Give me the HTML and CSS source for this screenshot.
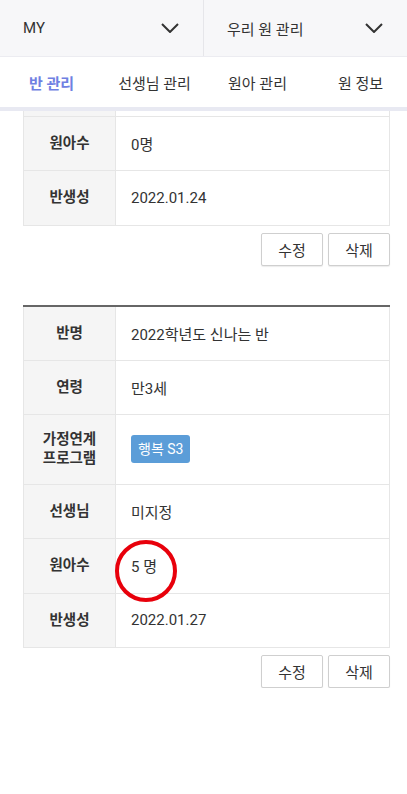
FILE: index.html
```html
<!DOCTYPE html>
<html lang="ko">
<head>
  <meta charset="UTF-8">
  <meta name="viewport" content="width=device-width, initial-scale=1.0">
  <title>우리 원 관리</title>
  <link rel="stylesheet" href="styles.css">
</head>
<body>
  <header class="topbar">
    <div class="picker">
      <span>MY</span>
      <svg class="chev" viewBox="0 0 18 10" width="18" height="10"><path d="M1 1l8 8 8-8" fill="none" stroke="#333" stroke-width="2"/></svg>
    </div>
    <div class="picker">
      <span>우리 원 관리</span>
      <svg class="chev" viewBox="0 0 18 10" width="18" height="10"><path d="M1 1l8 8 8-8" fill="none" stroke="#333" stroke-width="2"/></svg>
    </div>
  </header>

  <nav class="tabs">
    <a class="tab active">반 관리</a>
    <a class="tab">선생님 관리</a>
    <a class="tab">원아 관리</a>
    <a class="tab">원 정보</a>
  </nav>

  <main class="list">
    <section class="card">
      <table class="info first">
        <tr class="cut"><th></th><td></td></tr>
        <tr><th>원아수</th><td>0명</td></tr>
        <tr><th>반생성</th><td>2022.01.24</td></tr>
      </table>
      <div class="actions">
        <button class="btn">수정</button>
        <button class="btn">삭제</button>
      </div>
    </section>

    <section class="card">
      <table class="info">
        <tr><th>반명</th><td>2022학년도 신나는 반</td></tr>
        <tr><th>연령</th><td>만3세</td></tr>
        <tr class="tall"><th>가정연계<br>프로그램</th><td><span class="badge">행복 S3</span></td></tr>
        <tr><th>선생님</th><td>미지정</td></tr>
        <tr><th>원아수</th><td class="marked">5 명<span class="ring"></span></td></tr>
        <tr><th>반생성</th><td>2022.01.27</td></tr>
      </table>
      <div class="actions">
        <button class="btn">수정</button>
        <button class="btn">삭제</button>
      </div>
    </section>
  </main>
</body>
</html>
```

FILE: styles.css
```css
*{box-sizing:border-box;margin:0;padding:0;}
body{
  font-family:Roboto,"Noto Sans CJK KR",sans-serif;
  color:#333;
  background:#fff;
  width:407px;
  overflow:hidden;
}

/* ------- TOP SELECTS ------- */
.topbar{display:flex;height:57px;background:#f7f7f9;border-bottom:1px solid #ececf1;}
.picker{flex:1;display:flex;align-items:center;justify-content:space-between;padding:0 24px 0 23px;font-size:15px;}
.picker:first-child{border-right:1px solid #e6e6ea;}
.chev{display:block;}

/* ------- TABS ------- */
.tabs{display:flex;height:54px;border-bottom:4px solid #e8e9f2;overflow:hidden;}
.tab{flex:0 0 103px;display:flex;align-items:center;justify-content:center;font-size:15px;color:#333;margin-bottom:-4px;border-bottom:4px solid transparent;}
.tab.active{color:#6f80e2;font-weight:700;border-bottom-color:#7283e8;}

/* ------- CLASS CARDS ------- */
.list{padding:0 17px 0 23px;}
.card + .card{margin-top:39px;}
.info{width:100%;border-collapse:collapse;border-top:2px solid #666;}
.info.first{border-top:none;}
.info th,.info td{border:1px solid #e6e6e6;height:54.5px;font-size:15px;text-align:left;}
.info th{width:92px;background:#f5f5f5;text-align:center;font-weight:700;font-size:14.5px;line-height:19px;}
.info td{padding-left:15px;}
.info tr.cut th,.info tr.cut td{height:5px;border-top:none;}
.info tr.tall th,.info tr.tall td{height:69.5px;}
.badge{display:inline-block;background:#5b9dd8;color:#fff;font-size:14px;line-height:28px;padding:0 7px;border-radius:3px;}
.marked{position:relative;}
.ring{position:absolute;left:-1px;top:1px;width:62px;height:62px;border:4.5px solid #e8000b;border-radius:50%;}

.actions{display:flex;justify-content:flex-end;gap:5px;margin-top:7px;}
.btn{width:62px;height:33px;font:inherit;font-size:15px;color:#333;background:#fff;border:1px solid #cfcfcf;border-radius:2px;box-shadow:0 1px 1px rgba(0,0,0,.08);}
```
